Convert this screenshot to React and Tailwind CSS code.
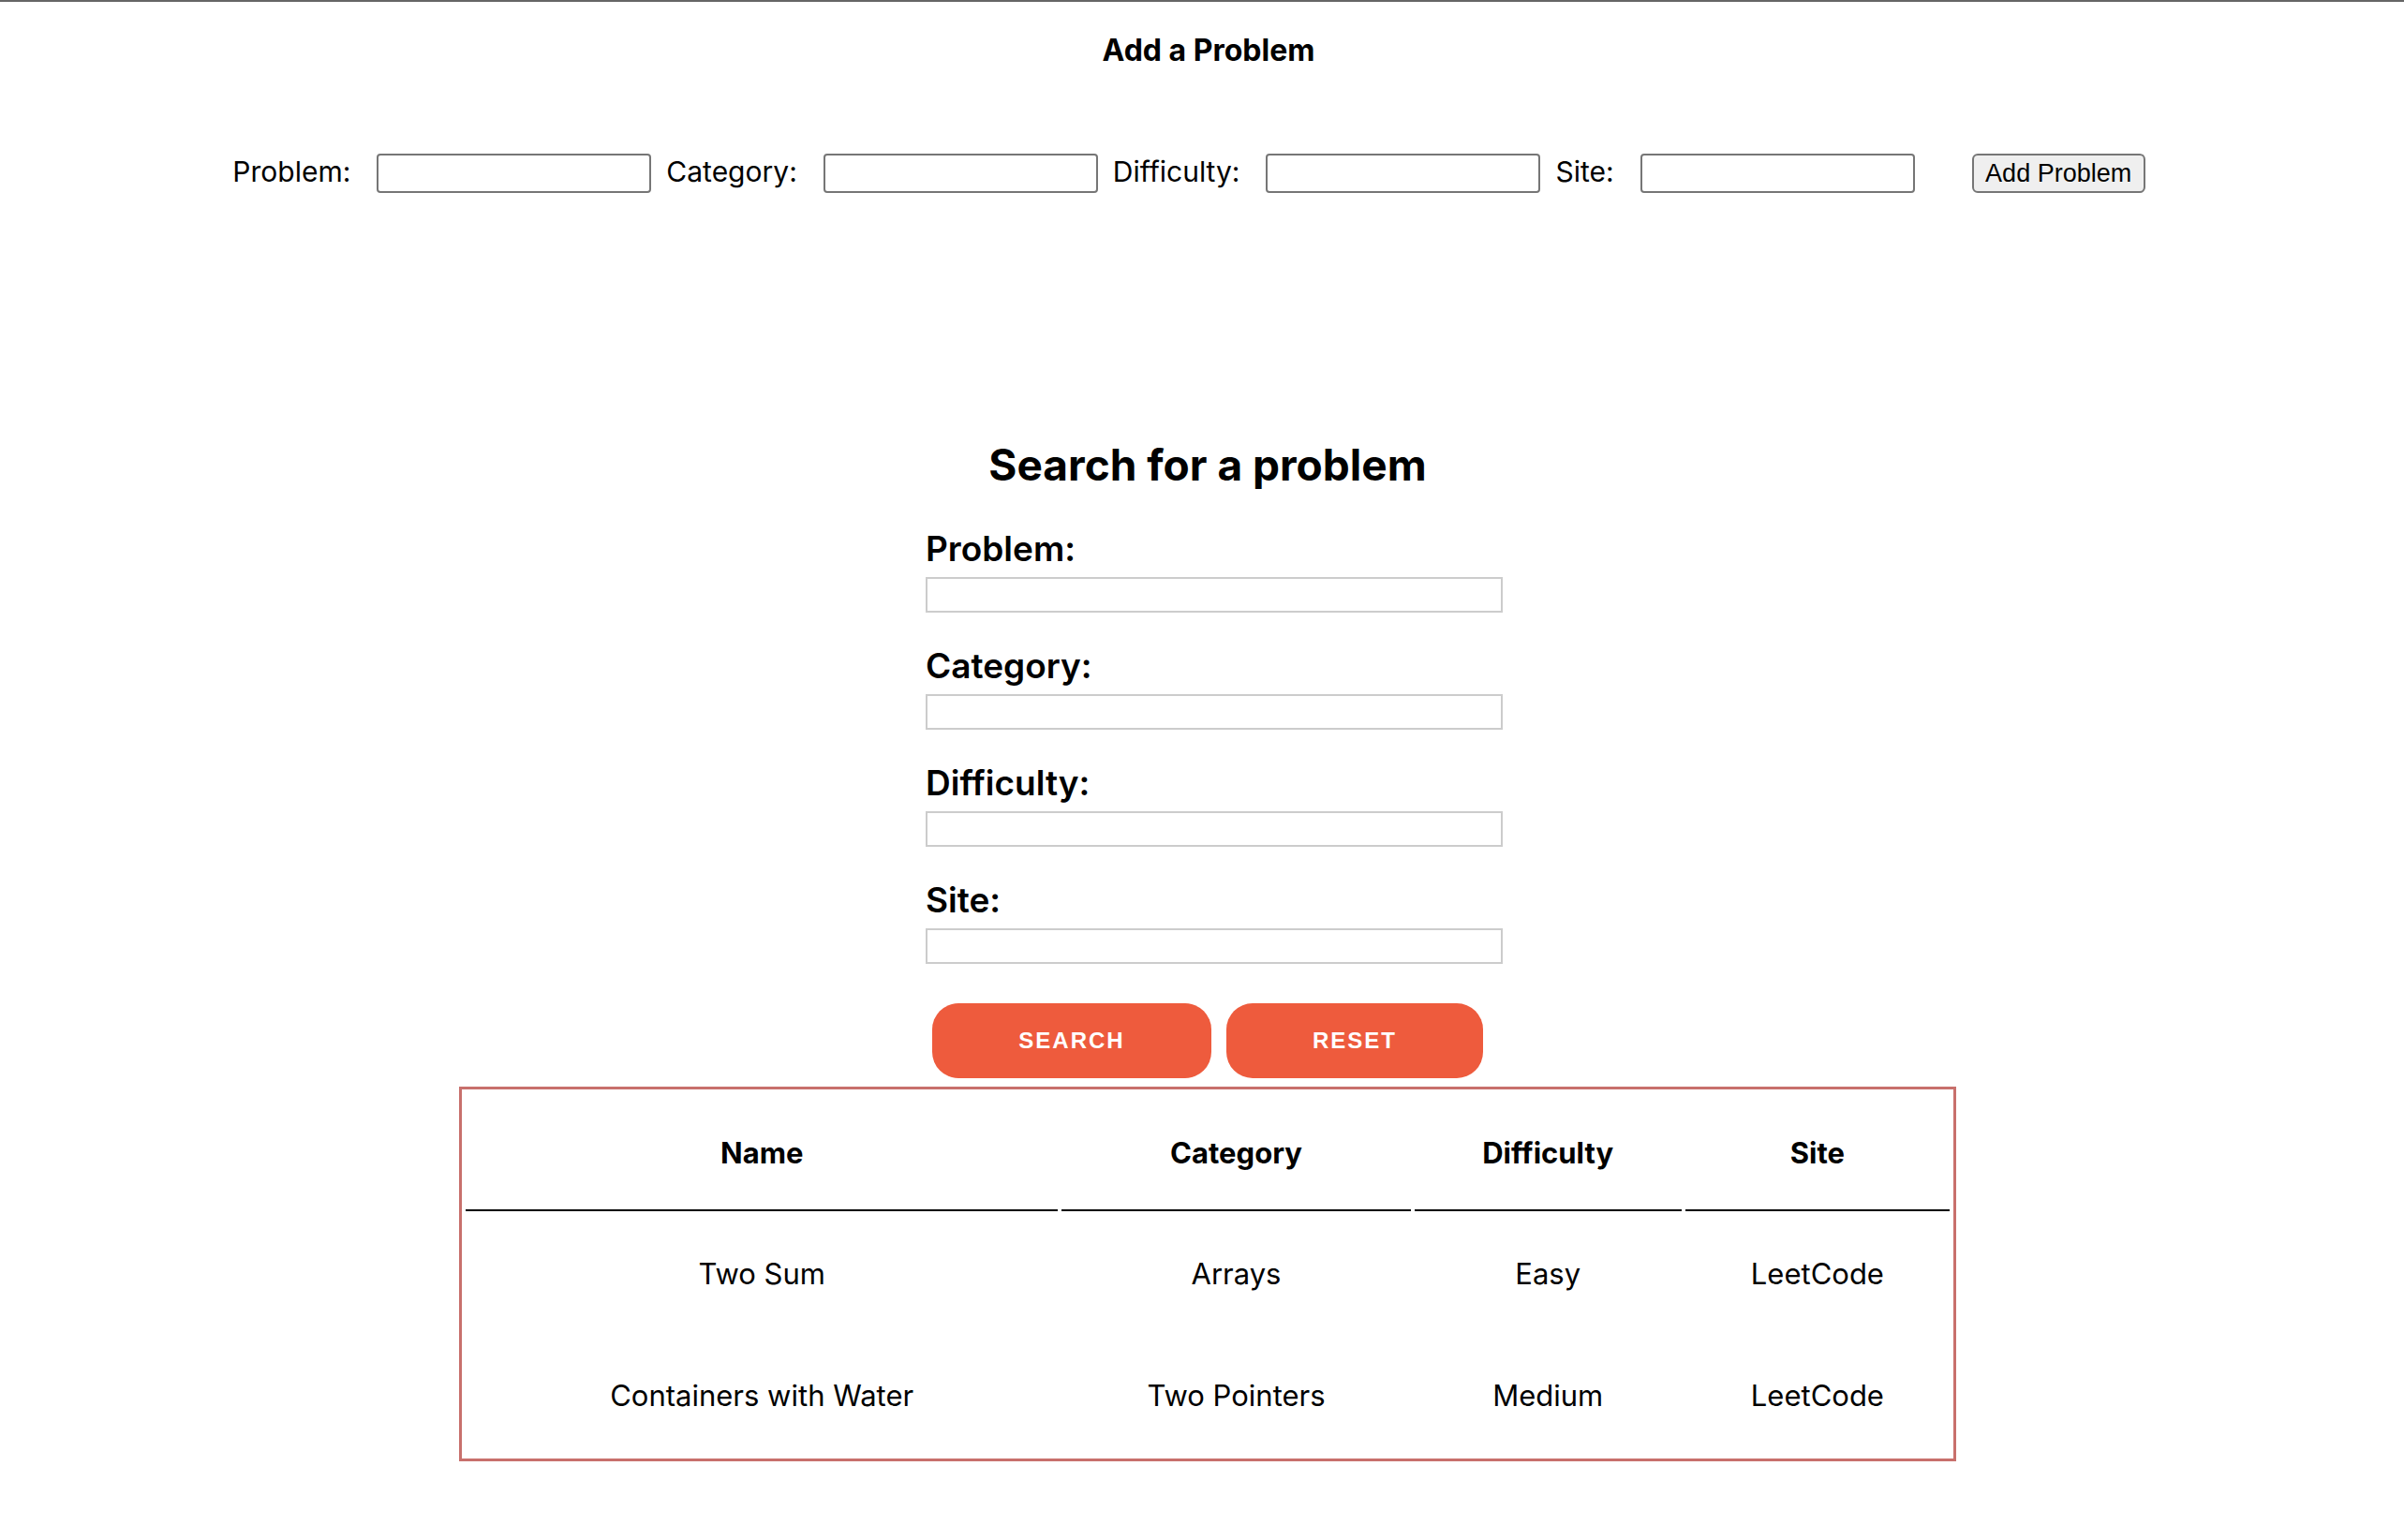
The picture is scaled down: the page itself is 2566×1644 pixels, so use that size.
import React from "react";

const problems = [
  { name: "Two Sum", category: "Arrays", difficulty: "Easy", site: "LeetCode" },
  { name: "Containers with Water", category: "Two Pointers", difficulty: "Medium", site: "LeetCode" },
];

const addFields = ["Problem:", "Category:", "Difficulty:", "Site:"];
const searchFields = ["Problem:", "Category:", "Difficulty:", "Site:"];

function AddProblem() {
  return (
    <div>
      <h3 className="mt-[33px] pl-[14px] text-center text-[32px] font-bold leading-[38px] text-black">Add a Problem</h3>
      <form className="mt-[91px] flex items-center justify-center">
        {addFields.map((label, i) => (
          <React.Fragment key={label}>
            <label className="mr-[28px] pb-[4px] text-[30px] leading-[36px] text-black">{label}</label>
            <input
              type="text"
              className={`h-[42px] w-[293px] rounded-[4px] border-2 border-[#767676] bg-white ${i < 3 ? "mr-[16px]" : "mr-[61px]"}`}
            />
          </React.Fragment>
        ))}
        <button
          type="button"
          className="mr-[28px] h-[42px] w-[185px] rounded-[6px] border-2 border-[#767676] bg-[#efefef] font-['Liberation_Sans',Arial,sans-serif] text-[27px] leading-none text-black"
        >
          Add Problem
        </button>
      </form>
    </div>
  );
}

function SearchProblem() {
  return (
    <div className="mt-[262px] pl-[12px]">
      <h2 className="text-center text-[46px] font-bold leading-[56px] text-black">Search for a problem</h2>
      <div className="mt-[40px] flex justify-center pl-[14px]">
        <div className="flex w-[616px] flex-col gap-[35px]">
          {searchFields.map((label) => (
            <div key={label} className="flex flex-col gap-[8px]">
              <label className="text-[37px] font-semibold leading-[44px] text-black">{label}</label>
              <input type="text" className="h-[38px] w-full border-2 border-[#cccccc] bg-white" />
            </div>
          ))}
        </div>
      </div>
      <div className="mt-[42px] flex justify-center gap-[16px]">
        <button className="h-[80px] w-[298px] rounded-[28px] bg-[#ee5b3d] font-['Liberation_Sans',Arial,sans-serif] text-[24px] font-bold tracking-[2px] text-white">
          SEARCH
        </button>
        <button className="h-[80px] w-[274px] rounded-[28px] bg-[#ee5b3d] font-['Liberation_Sans',Arial,sans-serif] text-[24px] font-bold tracking-[2px] text-white">
          RESET
        </button>
      </div>
      <div className="mt-[9px] flex justify-center">
        <table className="w-[1598px] table-fixed border-separate border-spacing-[4px] border-[3px] border-[#c8706c] text-center text-black">
          <thead>
            <tr>
              <th className="w-[632px] border-b-2 border-black pt-[45px] pb-[41px] text-[31px] font-bold leading-[38px]">Name</th>
              <th className="w-[372px] border-b-2 border-black pt-[45px] pb-[41px] text-[31px] font-bold leading-[38px]">Category</th>
              <th className="w-[285px] border-b-2 border-black pt-[45px] pb-[41px] text-[31px] font-bold leading-[38px]">Difficulty</th>
              <th className="w-[282px] border-b-2 border-black pt-[45px] pb-[41px] text-[31px] font-bold leading-[38px]">Site</th>
            </tr>
          </thead>
          <tbody>
            {problems.map((p) => (
              <tr key={p.name}>
                <td className="py-[44px] text-[31px] leading-[38px]">{p.name}</td>
                <td className="py-[44px] text-[31px] leading-[38px]">{p.category}</td>
                <td className="py-[44px] text-[31px] leading-[38px]">{p.difficulty}</td>
                <td className="py-[44px] text-[31px] leading-[38px]">{p.site}</td>
              </tr>
            ))}
          </tbody>
        </table>
      </div>
    </div>
  );
}

export default function App() {
  return (
    <div className="min-h-screen border-t-2 border-[#666666] bg-white pb-[80px] font-['Inter',sans-serif]">
      <AddProblem />
      <SearchProblem />
    </div>
  );
}
